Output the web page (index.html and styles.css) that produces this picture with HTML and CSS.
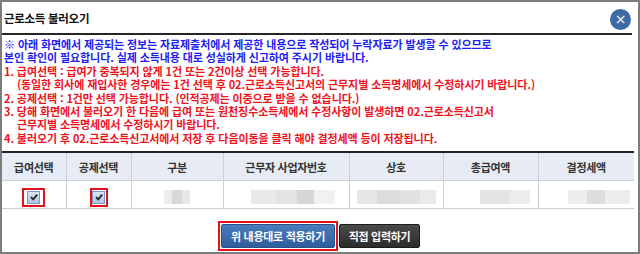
FILE: index.html
```html
<!DOCTYPE html>
<html lang="ko">
<head>
  <meta charset="UTF-8">
  <meta name="viewport" content="width=device-width, initial-scale=1.0">
  <link rel="stylesheet" href="styles.css">
</head>
<body>

<div class="dialog">
  <div class="dlg-head">
    <h1 class="dlg-title">근로소득 불러오기</h1>
    <span class="dlg-close">&times;</span>
  </div>

  <div class="notice">
    <p class="blue">※ 아래 화면에서 제공되는 정보는 자료제출처에서 제공한 내용으로 작성되어 누락자료가 발생할 수 있으므로</p>
    <p class="blue">본인 확인이 필요합니다. 실제 소득내용 대로 성실하게 신고하여 주시기 바랍니다.</p>
    <p class="red">1. 급여선택 : 급여가 중복되지 않게 1건 또는 2건이상 선택 가능합니다.</p>
    <p class="red indent">(동일한 회사에 재입사한 경우에는 1건 선택 후 02.근로소득신고서의 근무지별 소득명세에서 수정하시기 바랍니다.)</p>
    <p class="red">2. 공제선택 : 1건만 선택 가능합니다. (인적공제는 이중으로 받을 수 없습니다.)</p>
    <p class="red">3. 당해 화면에서 불러오기 한 다음에 급여 또는 원천징수소득세에서 수정사항이 발생하면 02.근로소득신고서</p>
    <p class="red indent">근무지별 소득명세에서 수정하시기 바랍니다.</p>
    <p class="red">4. 불러오기 후 02.근로소득신고서에서 저장 후 다음이동을 클릭 해야 결정세액 등이 저장됩니다.</p>
  </div>

  <table class="grid">
    <colgroup>
      <col style="width:64px">
      <col style="width:65px">
      <col style="width:92px">
      <col style="width:126px">
      <col style="width:94px">
      <col style="width:95px">
      <col>
    </colgroup>
    <thead>
      <tr>
        <th>급여선택</th>
        <th>공제선택</th>
        <th>구분</th>
        <th>근무자 사업자번호</th>
        <th>상호</th>
        <th>총급여액</th>
        <th>결정세액</th>
      </tr>
    </thead>
    <tbody>
      <tr>
        <td><span class="mark wide"><span class="chk"><svg viewBox="0 0 10 10" width="10" height="10"><path d="M2 5.2 L4.2 7.4 L8.2 2.6" fill="none" stroke="#222" stroke-width="1.8"/></svg></span></span></td>
        <td><span class="mark"><span class="chk"><svg viewBox="0 0 10 10" width="10" height="10"><path d="M2 5.2 L4.2 7.4 L8.2 2.6" fill="none" stroke="#222" stroke-width="1.8"/></svg></span></span></td>
        <td><span class="blur b-kind"></span></td>
        <td class="right"><span class="blur b-biz"></span></td>
        <td><span class="blur b-name"></span></td>
        <td><span class="blur b-pay"></span></td>
        <td class="right"><span class="blur b-tax"></span></td>
      </tr>
    </tbody>
  </table>

  <div class="actions">
    <span class="focus"><button class="btn btn-blue">위 내용대로 적용하기</button></span>
    <button class="btn btn-dark">직접 입력하기</button>
  </div>
</div>

</body>
</html>
```

FILE: styles.css
```css
body {
  margin: 0;
  font-family: "Noto Sans CJK KR", "Noto Sans", sans-serif;
  overflow: hidden;
  background: #fff;
}

.dialog {
  width: 640px;
  height: 254px;
  box-sizing: border-box;
  border: 2px solid #7d7d7d;
  padding: 0 6px 0 0;
  overflow: hidden;
}

.dlg-head {
  height: 31px;
  display: flex;
  align-items: center;
  justify-content: space-between;
  border-bottom: 2px solid #262626;
  padding-left: 2px;
}

.dlg-title {
  margin: 0;
  font-size: 11.5px;
  font-weight: bold;
  color: #111;
  letter-spacing: -0.3px;
}

.dlg-close {
  width: 21px;
  height: 21px;
  margin-top: 3px;
  margin-right: 1px;
  border-radius: 50%;
  background: #3b6aa5;
  color: #fff;
  font-family: "DejaVu Sans", sans-serif;
  font-size: 14px;
  line-height: 20px;
  text-align: center;
}

.notice {
  padding: 3px 0 0 2px;
  font-size: 11px;
  font-weight: bold;
  line-height: 13.4px;
  letter-spacing: -0.1px;
  white-space: nowrap;
}

.notice p {
  margin: 0;
}

.blue {
  color: #1d1df2;
}

.red {
  color: #f0121c;
}

.indent {
  padding-left: 13px;
}

.grid {
  margin-top: 6px;
  width: 632px;
  table-layout: fixed;
  border-collapse: collapse;
  border-top: 2px solid #222;
}

.grid th {
  height: 27px;
  padding: 0;
  background: #e7ecf4;
  color: #333;
  font-size: 11px;
  font-weight: bold;
  letter-spacing: -0.3px;
  border-left: 1px solid #c9d0dc;
  border-bottom: 1px solid #c9d0dc;
}

.grid td {
  height: 27px;
  padding: 0;
  text-align: center;
  border-left: 1px solid #c9d0dc;
  border-bottom: 1px solid #c9d0dc;
}

.grid th:first-child,
.grid td:first-child {
  border-left: none;
}

.grid td.right {
  text-align: right;
  padding-right: 4px;
}

.mark {
  display: inline-flex;
  align-items: center;
  justify-content: center;
  width: 14px;
  height: 15px;
  border: 2px solid #e3121a;
  vertical-align: middle;
}

.mark.wide {
  width: 19px;
}

.chk {
  display: inline-flex;
  align-items: center;
  justify-content: center;
  width: 11px;
  height: 11px;
  border: 1px solid #7d98c6;
  background: linear-gradient(#dbe5f4, #aec3e3);
}

.blur {
  display: inline-block;
  height: 14px;
  vertical-align: middle;
}

.b-kind {
  width: 26px;
  background: linear-gradient(90deg, #ececec 0 30%, #d8d8d8 30% 70%, #e6e6e6 70%);
}

.b-biz {
  width: 84px;
  margin-right: 10px;
  background: linear-gradient(90deg, #e9e9e9 0 30%, #e3e3e3 30% 55%, #d6d6d6 55% 75%, #f1f1f1 75%);
}

.b-name {
  width: 79px;
  background: linear-gradient(90deg, #e6e6e6 0 25%, #dcdcdc 25% 55%, #e2e2e2 55% 80%, #eaeaea 80%);
}

.b-pay {
  width: 50px;
  margin-left: 28px;
  background: linear-gradient(90deg, #e4e4e4 0 60%, #ececec 60%);
}

.b-tax {
  width: 62px;
  background: linear-gradient(90deg, #eeeeee 0 30%, #dddddd 30% 60%, #ececec 60%);
}

.actions {
  display: flex;
  justify-content: center;
  align-items: center;
  gap: 1px;
  margin-top: 12px;
  padding-left: 4px;
}

.focus {
  display: inline-block;
  padding: 1px;
  border: 2px solid #e3121a;
}

.btn {
  height: 24px;
  padding: 0 8px;
  font-family: "Noto Sans CJK KR", sans-serif;
  font-size: 11px;
  font-weight: bold;
  letter-spacing: -0.3px;
  color: #fff;
  border-radius: 2px;
  display: block;
}

.btn-blue {
  width: 114px;
  background: linear-gradient(#4a7cbd, #2f5e9c);
  border: 1px solid #2a5188;
}

.btn-dark {
  width: 81px;
  background: linear-gradient(#4a4a4a, #2c2c2c);
  border: 1px solid #1b1b1b;
}
```
